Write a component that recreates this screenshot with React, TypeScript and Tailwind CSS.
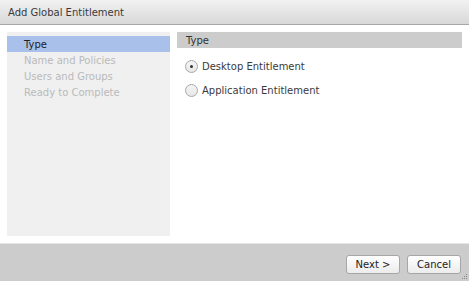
import React, { useState } from 'react';

const steps = ['Type', 'Name and Policies', 'Users and Groups', 'Ready to Complete'];

const Radio: React.FC<{ checked: boolean }> = ({ checked }) => (
  <span className="w-[13px] h-[13px] rounded-full border border-[#a8a8a8] bg-gradient-to-b from-[#f6f6f6] to-[#e6e6e6] flex items-center justify-center shrink-0">
    {checked && <span className="w-[3px] h-[3px] rounded-full bg-[#333]" />}
  </span>
);

export default function App() {
  const [type, setType] = useState('desktop');

  return (
    <div className="w-[469px] h-[281px] flex flex-col bg-white text-[10px] text-[#3a3a3a] font-['DejaVu_Sans',Verdana,sans-serif] overflow-hidden">
      <div className="h-[25px] shrink-0 flex items-center px-2 bg-gradient-to-b from-[#f2f2f2] to-[#d8d8d8] border-b border-[#a8a8a8] text-[#3a3a3a]">
        Add Global Entitlement
      </div>
      <div className="flex-1 flex px-[7px] pt-[7px] pb-[7px] gap-[7px]">
        <div className="w-[163px] shrink-0 bg-[#f0f0f0] pt-[4px]">
          {steps.map((s, i) => (
            <div
              key={s}
              className={`h-[16px] flex items-center pl-[17px] ${i === 0 ? 'bg-[#a8c0ea] text-[#222]' : 'text-[#bababa]'}`}
            >
              {s}
            </div>
          ))}
        </div>
        <div className="flex-1 flex flex-col">
          <div className="h-[16px] flex items-center bg-[#cccccc] pl-[9px] text-[#333]">Type</div>
          <div className="flex flex-col gap-[11px] pt-[12px] pl-[8px]">
            <label className="flex items-center gap-[4px] h-[13px]" onClick={() => setType('desktop')}>
              <Radio checked={type === 'desktop'} />
              <span>Desktop Entitlement</span>
            </label>
            <label className="flex items-center gap-[4px] h-[13px]" onClick={() => setType('app')}>
              <Radio checked={type === 'app'} />
              <span>Application Entitlement</span>
            </label>
          </div>
        </div>
      </div>
      <div className="h-[38px] shrink-0 relative bg-[#cccccc] border-t border-[#e6e6e6] flex items-center justify-end gap-[7px] pr-[8px] pt-[3px]">
        <button className="w-[54px] h-[19px] rounded-[3px] border border-[#a6a6a6] bg-gradient-to-b from-white to-[#ececec] text-[#222]">
          Next &gt;
        </button>
        <button className="w-[54px] h-[19px] rounded-[3px] border border-[#a6a6a6] bg-gradient-to-b from-white to-[#ececec] text-[#222]">
          Cancel
        </button>
        <svg className="absolute right-[1px] bottom-[1px]" width="7" height="7" viewBox="0 0 7 7">
          <rect x="5" y="1" width="1" height="1" fill="#888" />
          <rect x="3" y="3" width="1" height="1" fill="#888" />
          <rect x="5" y="3" width="1" height="1" fill="#888" />
          <rect x="1" y="5" width="1" height="1" fill="#888" />
          <rect x="3" y="5" width="1" height="1" fill="#888" />
          <rect x="5" y="5" width="1" height="1" fill="#888" />
        </svg>
      </div>
    </div>
  );
}
